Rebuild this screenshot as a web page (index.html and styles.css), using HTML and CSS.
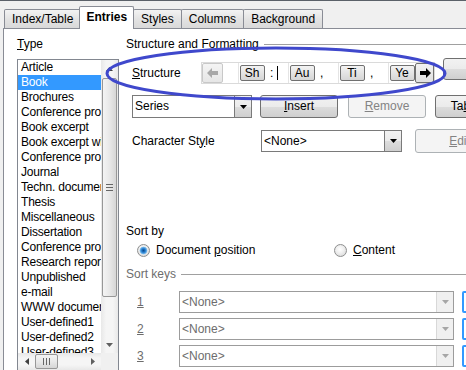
FILE: index.html
```html
<!DOCTYPE html>
<html>
<head>
<meta charset="utf-8">
<title>Entries</title>
<link rel="stylesheet" href="styles.css">
</head>
<body>
<div class="dialog">
  <div class="topline"></div>
  <div class="tabbar">
    <div class="tab">Index/Table</div>
    <div class="tab active">Entries</div>
    <div class="tab">Styles</div>
    <div class="tab">Columns</div>
    <div class="tab">Background</div>
  </div>
  <div class="panel">
    <div class="type-col">
      <div class="label"><u>T</u>ype</div>
      <div class="listbox">
        <ul class="items">
          <li>Article</li>
          <li class="sel">Book</li>
          <li>Brochures</li>
          <li>Conference proceedings</li>
          <li>Book excerpt</li>
          <li>Book excerpt with title</li>
          <li>Conference proceedings</li>
          <li>Journal</li>
          <li>Techn. documentation</li>
          <li>Thesis</li>
          <li>Miscellaneous</li>
          <li>Dissertation</li>
          <li>Conference proceedings</li>
          <li>Research report</li>
          <li>Unpublished</li>
          <li>e-mail</li>
          <li>WWW document</li>
          <li>User-defined1</li>
          <li>User-defined2</li>
          <li>User-defined3</li>
          <li>User-defined4</li>
        </ul>
        <div class="vscroll">
          <div class="sb-btn"><svg width="7" height="4" viewBox="0 0 7 4"><path d="M3.5 0L7 4H0z" fill="#404040"/></svg></div>
          <div class="vthumb"><span class="vgrip"></span></div>
          <div class="sb-fill"></div>
          <div class="sb-btn"><svg width="7" height="4" viewBox="0 0 7 4"><path d="M0 0h7L3.5 4z" fill="#606060"/></svg></div>
        </div>
        <div class="hscroll">
          <div class="sb-btn h"><svg width="4" height="7" viewBox="0 0 4 7"><path d="M0 3.5L4 0v7z" fill="#404040"/></svg></div>
          <div class="hthumb"><span class="hgrip"></span></div>
          <div class="sb-fill"></div>
          <div class="sb-btn h"><svg width="4" height="7" viewBox="0 0 4 7"><path d="M4 3.5L0 0v7z" fill="#606060"/></svg></div>
        </div>
        <div class="corner"></div>
      </div>
    </div>

    <div class="main-col">
      <div class="group-title"><span>Structure and Formatting</span></div>

      <div class="row struct-row">
        <span class="row-label"><u>S</u>tructure</span>
        <div class="struct">
          <div class="nav prev"><svg width="12" height="10" viewBox="0 0 12 10"><path d="M0 5L5 0V3H11V7H5V10Z" fill="#a8a8a8"/></svg></div>
          <div class="tokens">
            <span class="field first"></span>
            <span class="token">Sh</span>
            <span class="field">:<i class="caret"></i></span>
            <span class="token">Au</span>
            <span class="field">,</span>
            <span class="token">Ti</span>
            <span class="field">,</span>
            <span class="token">Ye</span>
          </div>
          <div class="nav next"><svg width="12" height="10" viewBox="0 0 12 10"><path d="M12 5L7 0V3H1V7H7V10Z" fill="#000"/></svg></div>
        </div>
        <div class="button extra"></div>
      </div>

      <div class="row action-row">
        <div class="combo series">
          <span class="combo-val">Series</span>
          <span class="combo-btn"><svg width="7" height="4" viewBox="0 0 7 4"><path d="M0 0h7L3.5 4z" fill="#000"/></svg></span>
        </div>
        <div class="button insert"><u>I</u>nsert</div>
        <div class="button remove disabled"><u>R</u>emove</div>
        <div class="button tabstop">Ta<u>b</u> stop</div>
      </div>

      <div class="row charstyle-row">
        <span class="row-label wide">Character St<u>y</u>le</span>
        <div class="combo charstyle">
          <span class="combo-val">&lt;None&gt;</span>
          <span class="combo-btn"><svg width="7" height="4" viewBox="0 0 7 4"><path d="M0 0h7L3.5 4z" fill="#000"/></svg></span>
        </div>
        <div class="button edit disabled"><u>E</u>dit...</div>
      </div>

      <div class="section-label">Sort by</div>
      <div class="radios">
        <label class="radio-item"><span class="radio checked"></span><span>Document <u>p</u>osition</span></label>
        <label class="radio-item"><span class="radio"></span><span><u>C</u>ontent</span></label>
      </div>

      <div class="group-title disabled"><span>Sort keys</span></div>

      <div class="keys">
        <div class="key-row">
          <span class="key-num"><u>1</u></span>
          <div class="combo key disabled">
            <span class="combo-val">&lt;None&gt;</span>
            <span class="combo-btn"><svg width="7" height="4" viewBox="0 0 7 4"><path d="M0 0h7L3.5 4z" fill="#a6a6a6"/></svg></span>
          </div>
          <span class="sortdir"></span>
        </div>
        <div class="key-row">
          <span class="key-num"><u>2</u></span>
          <div class="combo key disabled">
            <span class="combo-val">&lt;None&gt;</span>
            <span class="combo-btn"><svg width="7" height="4" viewBox="0 0 7 4"><path d="M0 0h7L3.5 4z" fill="#a6a6a6"/></svg></span>
          </div>
          <span class="sortdir"></span>
        </div>
        <div class="key-row">
          <span class="key-num"><u>3</u></span>
          <div class="combo key disabled">
            <span class="combo-val">&lt;None&gt;</span>
            <span class="combo-btn"><svg width="7" height="4" viewBox="0 0 7 4"><path d="M0 0h7L3.5 4z" fill="#a6a6a6"/></svg></span>
          </div>
          <span class="sortdir"></span>
        </div>
      </div>
    </div>
  </div>

  <svg class="annotation" width="466" height="370" viewBox="0 0 466 370">
    <ellipse cx="276" cy="73.5" rx="169" ry="25.5" fill="none" stroke="#3f48cc" stroke-width="3"/>
  </svg>
</div>
</body>
</html>
```

FILE: styles.css
```css
* {
  box-sizing: border-box;
}

html,
body {
  margin: 0;
  padding: 0;
}

body {
  background: #f0f0f0;
  font: 12px/15px "Liberation Sans", Arial, sans-serif;
  color: #000;
}

u {
  text-decoration: underline;
  text-underline-offset: 1px;
}

.dialog {
  position: relative;
  width: 466px;
  height: 370px;
  overflow: hidden;
}

.topline {
  height: 1px;
  background: #5b6169;
}

/* ---------- tabs ---------- */
.tabbar {
  display: flex;
  align-items: flex-end;
  height: 27px;
  padding-left: 4px;
}

.tab {
  height: 19px;
  padding: 0 7px;
  border: 1px solid #898c95;
  border-bottom: none;
  border-radius: 2px 2px 0 0;
  background: linear-gradient(#f3f3f3, #e3e3e3 50%, #d9d9d9);
  line-height: 18px;
  white-space: nowrap;
  margin-right: -1px;
}

.tab.active {
  position: relative;
  z-index: 1;
  height: 23px;
  margin: 0 -1px -1px -1px;
  padding: 0 6px;
  background: #fff;
  font-weight: bold;
  line-height: 21px;
}

.tab.active + .tab {
  margin-left: 0;
}

/* ---------- panel ---------- */
.panel {
  display: flex;
  height: 342px;
  margin-left: 3px;
  padding: 8px 0 0 13px;
  background: #fff;
  border-top: 1px solid #898c95;
  border-left: 1px solid #898c95;
  overflow: hidden;
}

.type-col {
  flex: 0 0 102px;
  margin-right: 7px;
}

.label {
  height: 15px;
}

.listbox {
  margin-top: 7px;
  width: 102px;
  height: 312px;
  border: 1px solid #828790;
  display: grid;
  grid-template-columns: 83px 17px;
  grid-template-rows: 293px 17px;
}

.items {
  margin: 0;
  padding: 0;
  list-style: none;
  overflow: hidden;
  letter-spacing: -0.2px;
}

.items li {
  height: 15px;
  padding-left: 3px;
  white-space: nowrap;
  overflow: hidden;
}

.items li.sel {
  background: #3399ff;
  color: #fff;
}

.vscroll {
  display: flex;
  flex-direction: column;
  background: linear-gradient(90deg, #e8e8e8, #f5f5f5 30%, #f5f5f5 70%, #e8e8e8);
}

.sb-btn {
  flex: 0 0 17px;
  display: flex;
  align-items: center;
  justify-content: center;
}

.sb-fill {
  flex: 1;
}

.vthumb {
  height: 219px;
  margin: 1px 1px 0;
  border: 1px solid #979797;
  border-radius: 2px;
  background: linear-gradient(90deg, #f4f4f4, #e8e8e8 50%, #d6d6d6);
  display: flex;
  align-items: center;
  justify-content: center;
}

.vgrip {
  width: 7px;
  height: 7px;
  background: repeating-linear-gradient(#666 0 1px, transparent 1px 3px);
}

.hscroll {
  display: flex;
  background: linear-gradient(#e8e8e8, #f5f5f5 30%, #f5f5f5 70%, #e8e8e8);
}

.sb-btn.h {
  flex: 0 0 17px;
}

.hthumb {
  width: 23px;
  margin: 1px 0 1px 0;
  border: 1px solid #979797;
  border-radius: 2px;
  background: linear-gradient(#f4f4f4, #e8e8e8 50%, #d6d6d6);
  display: flex;
  align-items: center;
  justify-content: center;
}

.hgrip {
  width: 7px;
  height: 7px;
  background: repeating-linear-gradient(90deg, #666 0 1px, transparent 1px 3px);
}

.corner {
  background: #f0f0f0;
}

/* ---------- main column ---------- */
.main-col {
  flex: 0 0 360px;
  display: flex;
  flex-direction: column;
}

.group-title {
  display: flex;
  align-items: center;
  height: 15px;
  white-space: nowrap;
}

.group-title::after {
  content: "";
  flex: 1;
  height: 1px;
  margin-left: 5px;
  background: #a0a0a0;
}

.group-title.disabled {
  color: #6d6d6d;
  margin-top: 9px;
}

.row {
  display: flex;
  flex-shrink: 0;
  padding-left: 6px;
}

.row-label {
  flex: 0 0 69px;
  white-space: nowrap;
}

.row-label.wide {
  flex-basis: 129px;
}

/* structure row */
.struct-row {
  margin-top: 6px;
  align-items: flex-start;
}

.struct-row .row-label {
  margin-top: 8px;
}

.struct {
  flex: 0 0 227px;
  display: flex;
  height: 22px;
  margin-top: 4px;
  background: #fff;
  border: 1px solid #dadada;
}

.nav {
  display: flex;
  align-items: center;
  justify-content: center;
  border-radius: 2px;
}

.nav.prev {
  flex: 0 0 21px;
  border: 1px solid #c8c8c8;
  background: linear-gradient(#f4f4f4, #e6e6e6);
}

.nav.next {
  flex: 0 0 19px;
  border: 1px solid #707070;
  background: linear-gradient(#f2f2f2, #e0e0e0);
}

.tokens {
  flex: 1;
  min-width: 0;
  display: flex;
  align-items: center;
  overflow: hidden;
}

.field {
  flex: 0 0 24px;
  height: 100%;
  padding-left: 5px;
  display: flex;
  align-items: center;
  border-right: 1px solid #e4e4e4;
}

.field.first {
  flex-basis: 16px;
}

.caret {
  width: 1px;
  height: 14px;
  margin-left: 4px;
  background: #000;
}

.token {
  flex: 0 0 25px;
  height: 16px;
  margin: 0 0.5px;
  border: 1px solid #707070;
  border-radius: 2px;
  background: linear-gradient(#f3f3f3, #e4e4e4 50%, #d6d6d6);
  text-align: center;
  line-height: 14px;
}

.button {
  flex-shrink: 0;
  height: 23px;
  padding: 0 7px;
  border: 1px solid #707070;
  border-radius: 3px;
  background: linear-gradient(#f2f2f2, #ebebeb 50%, #dddddd 50%, #cfcfcf);
  text-align: center;
  line-height: 21px;
  white-space: nowrap;
}

.button.disabled {
  border-color: #adb2b5;
  background: #f4f4f4;
  color: #838383;
}

.button.extra {
  width: 77px;
  height: 22px;
  margin-left: 8px;
}

/* action row */
.action-row {
  margin-top: 11px;
  height: 23px;
}

.combo {
  flex-shrink: 0;
  display: flex;
  background: #fff;
  border: 1px solid #7a7a7a;
}

.combo-val {
  flex: 1;
  padding-left: 2px;
  white-space: nowrap;
  overflow: hidden;
  display: flex;
  align-items: center;
}

.combo-btn {
  flex: 0 0 17px;
  display: flex;
  align-items: center;
  justify-content: center;
  border-left: 1px solid #7a7a7a;
  background: linear-gradient(#f2f2f2, #ebebeb 50%, #dddddd 50%, #cfcfcf);
}

.combo.series {
  width: 120px;
  height: 23px;
}

.button.insert {
  width: 78px;
  margin-left: 8px;
}

.button.remove {
  width: 78px;
  margin-left: 10px;
}

.button.tabstop {
  width: 77px;
  margin-left: 9px;
  padding: 0;
}

/* character style row */
.charstyle-row {
  margin-top: 11px;
  height: 24px;
  align-items: center;
}

.combo.charstyle {
  width: 141px;
  height: 22px;
}

.button.edit {
  width: 99px;
  height: 24px;
  margin-left: 13px;
  padding: 0;
  line-height: 22px;
}

/* sort by */
.section-label {
  margin-top: 71px;
  height: 15px;
}

.radios {
  display: grid;
  grid-template-columns: 197px auto;
  margin-top: 4px;
  padding-left: 11px;
  height: 15px;
}

.radio-item {
  display: flex;
  align-items: center;
  white-space: nowrap;
}

.radio {
  flex: 0 0 13px;
  height: 13px;
  margin-right: 6px;
  border: 1px solid #8e8f8f;
  border-radius: 50%;
  background: radial-gradient(circle at 45% 40%, #ffffff, #f0f0f0 40%, #d2d2d2);
}

.radio.checked {
  background:
    radial-gradient(circle at 50% 50%, #0b4a8a 0, #1c6fc0 1.5px, #4d9ee0 2.8px, #8cc4ee 3.6px, rgba(255,255,255,0) 4.2px),
    radial-gradient(circle at 45% 40%, #ffffff, #f0f0f0 40%, #d2d2d2);
}

/* sort keys */
.keys {
  margin-top: 9px;
  display: flex;
  flex-direction: column;
  gap: 5px;
}

.key-row {
  display: flex;
  align-items: center;
  padding-left: 11px;
  height: 22px;
}

.key-num {
  flex: 0 0 42px;
  color: #6d6d6d;
}

.combo.key {
  width: 275px;
  height: 22px;
  border-color: #9c9c9c;
}

.combo.disabled .combo-val {
  color: #6d6d6d;
}

.combo.disabled .combo-btn {
  border-left: 1px solid #d8d8d8;
  background: #f0f0f0;
}

.sortdir {
  flex: 0 0 22px;
  height: 22px;
  margin-left: 8px;
  border: 2px solid #3399ff;
  border-radius: 2px;
  background: #fff;
}

/* annotation overlay */
.annotation {
  position: absolute;
  left: 0;
  top: 0;
  pointer-events: none;
}
```
